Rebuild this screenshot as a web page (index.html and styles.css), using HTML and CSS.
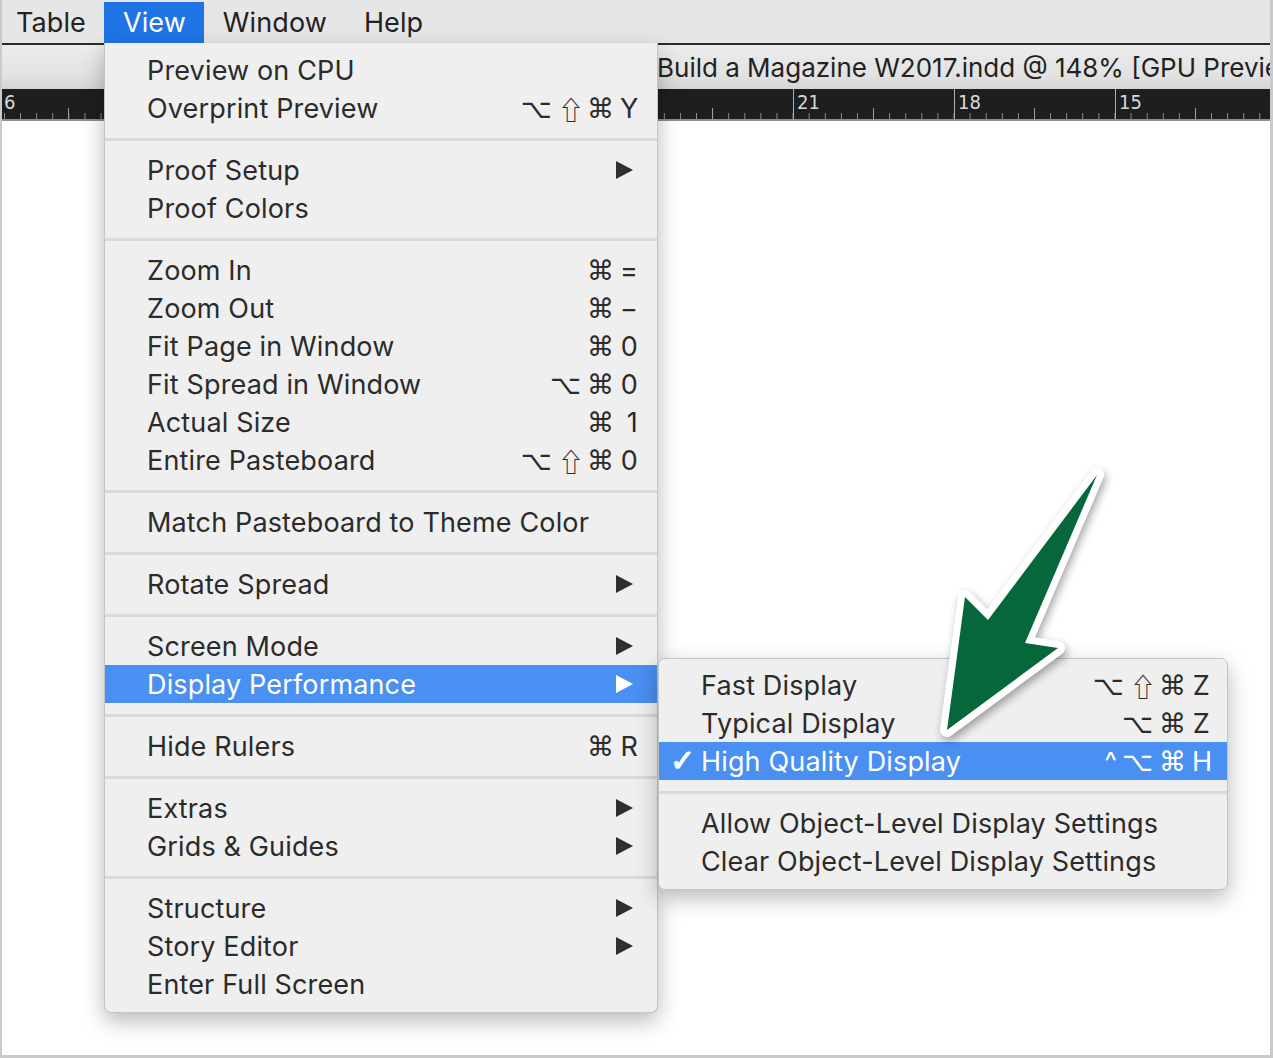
FILE: index.html
```html
<!DOCTYPE html>
<html>
<head>
<meta charset="utf-8">
<link rel="stylesheet" href="styles.css">
</head>
<body>
<div class="frame">
  <div class="menubar">
    <span class="mb-item first">Table</span>
    <span class="mb-item active">View</span>
    <span class="mb-item">Window</span>
    <span class="mb-item">Help</span>
  </div>
  <div class="tabbar"><span class="title">Build a Magazine W2017.indd @ 148% [GPU Preview]</span></div>
  <div class="ruler">
    <span class="rl rl-first">6</span><span class="rl">21</span><span class="rl">18</span><span class="rl">15</span>
  </div>
  <div class="canvas"></div>

  <div class="menu main-menu">
    <div class="row"><span class="label">Preview on CPU</span></div>
    <div class="row"><span class="label">Overprint Preview</span><span class="sc"><span class="mods">⌥<span class="shift">⇧</span>⌘</span><span class="key">Y</span></span></div>
    <div class="sep"></div>
    <div class="row"><span class="label">Proof Setup</span><span class="tri"></span></div>
    <div class="row"><span class="label">Proof Colors</span></div>
    <div class="sep"></div>
    <div class="row"><span class="label">Zoom In</span><span class="sc"><span class="mods">⌘</span><span class="key">=</span></span></div>
    <div class="row"><span class="label">Zoom Out</span><span class="sc"><span class="mods">⌘</span><span class="key">−</span></span></div>
    <div class="row"><span class="label">Fit Page in Window</span><span class="sc"><span class="mods">⌘</span><span class="key">0</span></span></div>
    <div class="row"><span class="label">Fit Spread in Window</span><span class="sc"><span class="mods">⌥⌘</span><span class="key">0</span></span></div>
    <div class="row"><span class="label">Actual Size</span><span class="sc"><span class="mods">⌘</span><span class="key">1</span></span></div>
    <div class="row"><span class="label">Entire Pasteboard</span><span class="sc"><span class="mods">⌥<span class="shift">⇧</span>⌘</span><span class="key">0</span></span></div>
    <div class="sep"></div>
    <div class="row"><span class="label">Match Pasteboard to Theme Color</span></div>
    <div class="sep"></div>
    <div class="row"><span class="label">Rotate Spread</span><span class="tri"></span></div>
    <div class="sep"></div>
    <div class="row"><span class="label">Screen Mode</span><span class="tri"></span></div>
    <div class="row hl"><span class="label">Display Performance</span><span class="tri"></span></div>
    <div class="sep"></div>
    <div class="row"><span class="label">Hide Rulers</span><span class="sc"><span class="mods">⌘</span><span class="key">R</span></span></div>
    <div class="sep"></div>
    <div class="row"><span class="label">Extras</span><span class="tri"></span></div>
    <div class="row"><span class="label">Grids &amp; Guides</span><span class="tri"></span></div>
    <div class="sep"></div>
    <div class="row"><span class="label">Structure</span><span class="tri"></span></div>
    <div class="row"><span class="label">Story Editor</span><span class="tri"></span></div>
    <div class="row"><span class="label">Enter Full Screen</span></div>
  </div>

  <div class="menu sub-menu">
    <div class="row"><span class="check"></span><span class="label">Fast Display</span><span class="sc"><span class="mods">⌥<span class="shift">⇧</span>⌘</span><span class="key">Z</span></span></div>
    <div class="row"><span class="check"></span><span class="label">Typical Display</span><span class="sc"><span class="mods">⌥⌘</span><span class="key">Z</span></span></div>
    <div class="row hl"><span class="check">✓</span><span class="label">High Quality Display</span><span class="sc"><span class="mods"><span class="ctrl">^</span>⌥⌘</span><span class="key">H</span></span></div>
    <div class="sep"></div>
    <div class="row"><span class="check"></span><span class="label">Allow Object-Level Display Settings</span></div>
    <div class="row"><span class="check"></span><span class="label">Clear Object-Level Display Settings</span></div>
  </div>

  <svg class="arrow" viewBox="918 450 200 300" width="200" height="300">
    <polygon points="1097,475 1025,643 1058,648 947,730 965,597 988,620" fill="#05673b" stroke="#ffffff" stroke-width="14" stroke-linejoin="round" paint-order="stroke"/>
  </svg>
</div>
</body>
</html>
```

FILE: styles.css
```css
* { box-sizing: border-box; }
html, body { margin: 0; padding: 0; background: #ffffff; }
body {
  width: 1273px;
  height: 1058px;
  overflow: hidden;
  font-family: "Inter", "Liberation Sans", sans-serif;
  color: #2b2b2b;
}
.frame {
  position: relative;
  width: 1273px;
  height: 1058px;
  border-left: 2px solid #cacaca;
  border-right: 3px solid #cacaca;
  border-bottom: 3px solid #cacaca;
  display: flex;
  flex-direction: column;
  overflow: hidden;
}
.menubar {
  height: 45px;
  padding-top: 2px;
  background: #e6e6e6;
  border-bottom: 2px solid #2c2c2c;
  display: flex;
  flex: none;
}
.mb-item {
  height: 41px;
  padding: 0 18.5px;
  font-size: 27px;
  line-height: 41px;
  letter-spacing: 0.1px;
  color: #222;
}
.mb-item.first { padding-left: 14px; }
.mb-item.active { background: #1f74e6; color: #fff; }

.tabbar {
  height: 44px;
  flex: none;
  background: linear-gradient(#ececec, #e2e2e2 70%, #d4d4d4);
  overflow: hidden;
  white-space: nowrap;
  padding-left: 655px;
  font-size: 26px;
  line-height: 46px;
  color: #222;
}

.ruler {
  height: 32px;
  flex: none;
  background-color: #1e1e1e;
  border-bottom: 2px solid #8d8d8d;
  display: flex;
  font-family: "DejaVu Sans Condensed", "DejaVu Sans", sans-serif;
  font-size: 20px;
  color: #d9d9d9;
  line-height: 26px;
  background-image:
    linear-gradient(to right, #b0b0b0 1px, transparent 1px),
    linear-gradient(to right, #a0a0a0 1px, transparent 1px),
    linear-gradient(to right, #909090 1px, transparent 1px);
  background-size: 161px 100%, 161px 11px, 16.1px 6px;
  background-position: 147px 0, 227px 100%, 2px 100%;
  background-repeat: repeat-x;
}
.rl { width: 161px; padding-left: 4px; flex: none; }
.rl-first { width: 791px; padding-left: 2px; }
.canvas { flex: 1; background: #fff; }

.menu {
  position: absolute;
  background: #efefef;
  font-size: 27px;
  letter-spacing: 0.15px;
  color: #2b2b2b;
}
.main-menu {
  left: 102px;
  top: 43px;
  width: 554px;
  padding: 8px 0 9px;
  border-radius: 0 0 7px 7px;
  border: 1px solid #c4c4c4;
  border-top: none;
  box-shadow: 0 8px 22px rgba(0,0,0,0.28);
}
.sub-menu {
  left: 656px;
  top: 658px;
  width: 570px;
  padding: 7px 0 9px;
  border-radius: 7px;
  border: 1px solid #c4c4c4;
  box-shadow: 0 8px 22px rgba(0,0,0,0.28);
}
.row {
  height: 38px;
  display: flex;
  align-items: center;
  white-space: nowrap;
}
.main-menu .row { padding: 0 19px 0 42px; }
.sub-menu .row { padding: 0 17px 0 11px; }
.row.hl { background: #4a8ff2; color: #fff; }
.label { flex: 1; }
.check {
  width: 31px;
  flex: none;
  font-family: "DejaVu Sans", sans-serif;
  font-size: 30px;
  line-height: 30px;
  -webkit-text-stroke: 1.2px #fff;
}
.sc { display: flex; align-items: center; }
.mods {
  font-family: "DejaVu Sans", sans-serif;
  font-size: 27px;
  letter-spacing: 6px;
  display: flex;
  align-items: center;
}
.shift {
  font-family: "Noto Sans CJK JP", "DejaVu Sans", sans-serif;
  font-size: 26px;
  letter-spacing: 3px;
}
.ctrl { font-family: "Inter", sans-serif; letter-spacing: 5px; }
.key { width: 18px; text-align: right; }
.tri {
  width: 0;
  height: 0;
  margin-right: 5px;
  border-left: 17px solid #2f2f2f;
  border-top: 9px solid transparent;
  border-bottom: 9px solid transparent;
}
.hl .tri { border-left-color: #fff; }
.sep {
  height: 3px;
  margin: 11px 0 10px;
  background: #dadada;
}
.arrow {
  position: absolute;
  left: 916px;
  top: 450px;
  filter: drop-shadow(2px 4px 4px rgba(0,0,0,0.35));
}
```
